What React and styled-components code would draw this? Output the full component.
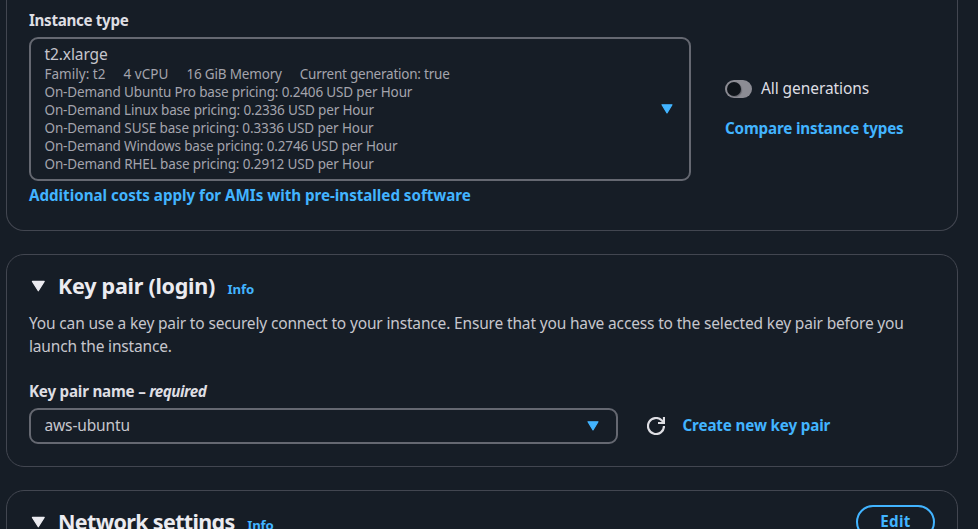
import React from "react";
import styled, { createGlobalStyle } from "styled-components";

const GlobalStyle = createGlobalStyle`
  * { box-sizing: border-box; }
  body {
    margin: 0;
    background: #161d26;
    color: #c6c6cd;
    font: 400 15.5px/22px "Noto Sans", "Open Sans", sans-serif;
    overflow: hidden;
  }
`;

const Page = styled.main`
  display: flex;
  flex-direction: column;
  gap: 23px;
  width: 978px;
  height: 529px;
  padding: 0 20px 0 6px;
  overflow: hidden;
`;

const Card = styled.section`
  flex: none;
  width: 952px;
  height: ${(p) => p.$height}px;
  padding: 17px 22px 0;
  border: 1px solid #424650;
  border-radius: 18px;
`;

const OpenTopCard = styled(Card)`
  padding-top: 9px;
  border-top: 0;
  border-radius: 0 0 18px 18px;
`;

const Row = styled.div`
  display: flex;
  align-items: flex-start;
`;

const Field = styled.div`
  display: flex;
  flex-direction: column;
  width: ${(p) => p.$width}px;
`;

const Label = styled.div`
  margin-bottom: 6px;
  color: #dedee3;
  font-size: 15.2px;
  font-weight: 700;
  white-space: pre;
  letter-spacing: ${(p) => p.$track || 0}px;
`;

const Required = styled.em`
  letter-spacing: -0.5px;
`;

const Select = styled.div`
  display: flex;
  align-items: center;
  justify-content: space-between;
  height: ${(p) => p.$height}px;
  padding: 0 ${(p) => p.$end || 16}px 0 13.5px;
  border: 2px solid #656871;
  border-radius: 9px;
`;

const Option = styled.div`
  display: flex;
  flex-direction: column;
  margin-bottom: 2px;
`;

const OptionName = styled.div`
  letter-spacing: ${(p) => p.$track}px;
`;

const Details = styled.div`
  display: flex;
  gap: 18px;
  height: 18px;
  color: #a4a4ad;
  font-size: 13.5px;
  line-height: 18px;
  white-space: nowrap;
`;

const Detail = styled.span`
  letter-spacing: ${(p) => p.$track}px;
`;

const Link = styled.a`
  color: #42b4ff;
  font-size: 15.2px;
  font-weight: 700;
  white-space: nowrap;
  letter-spacing: ${(p) => p.$track || 0}px;
`;

const CostLink = styled(Link)`
  margin-top: 3px;
`;

const Side = styled.div`
  display: flex;
  flex-direction: column;
  gap: 18px;
  margin: 68px 0 0 34px;
`;

const ToggleRow = styled.label`
  display: flex;
  align-items: center;
  gap: 9px;
  color: #dedee3;
  letter-spacing: -0.08px;
`;

const Track = styled.span`
  width: 27px;
  height: 18px;
  margin-top: 1px;
  padding: 2px;
  border-radius: 9px;
  background: #8c8c94;
`;

const Thumb = styled.span`
  display: block;
  width: 14px;
  height: 14px;
  border-radius: 50%;
  background: #0f141a;
  box-shadow: 1px 1px 1px rgba(15, 20, 26, 0.3);
`;

const Header = styled.header`
  display: flex;
  align-items: center;
  height: 28px;
  padding-left: 2px;
`;

const Title = styled.h2`
  margin: 0 0 0 12px;
  color: #ebebf0;
  font-size: 21.5px;
  font-weight: 700;
  line-height: 28px;
  letter-spacing: ${(p) => p.$track}px;
`;

const Info = styled(Link)`
  margin: 6px 0 0 12.5px;
  font-size: 13.2px;
  letter-spacing: -0.15px;
`;

const Description = styled.p`
  margin: 12px 0 22px;
  line-height: 23px;
  white-space: pre;
  letter-spacing: -0.16px;
`;

const Actions = styled.div`
  display: flex;
  align-items: center;
  gap: 17.5px;
  height: 36px;
  margin: 28px 0 0 29px;
`;

const ActionLink = styled(Link)`
  margin-bottom: 2px;
`;

const KeyName = styled(OptionName)`
  margin-bottom: 2px;
`;

const EditButton = styled.button`
  width: 79px;
  height: 34px;
  margin: 0 0 0 auto;
  padding: 0 0 2px;
  border: 2px solid #42b4ff;
  border-radius: 18px;
  background: transparent;
  color: #42b4ff;
  font: inherit;
  font-size: 15.2px;
  font-weight: 700;
  letter-spacing: 0.3px;
`;

const Icon = styled.svg`
  display: block;
  flex: none;
`;

const SelectCaret = () => (
  <Icon width="12" height="10" viewBox="0 0 12 10">
    <path d="M1 .8h10L6 8.9z" fill="#42b4ff" stroke="#42b4ff" strokeWidth="1.2" strokeLinejoin="round" />
  </Icon>
);

const HeaderCaret = () => (
  <Icon width="15" height="12" viewBox="0 0 15 12">
    <path d="M1.4 1.4h11.8L7.3 10.8z" fill="#ebebf0" stroke="#ebebf0" strokeWidth="1.2" strokeLinejoin="round" />
  </Icon>
);

const RefreshIcon = () => (
  <Icon width="18" height="18" viewBox="0 0 18 18" fill="none" stroke="#dedee3" strokeWidth="2.2">
    <path d="M17 9a8 8 0 1 1-2.4-5.7L16.6 5.3" />
    <path d="M17 0v6H11" />
  </Icon>
);

const prices = [
  ["Ubuntu Pro", "0.2406", -0.15],
  ["Linux", "0.2336", -0.155],
  ["SUSE", "0.3336", -0.12],
  ["Windows", "0.2746", -0.145],
  ["RHEL", "0.2912", -0.135],
];

export default function App() {
  return (
    <>
      <GlobalStyle />
      <Page>
        <OpenTopCard $height={231}>
          <Row>
            <Field $width={662}>
              <Label $track={-0.33}>Instance type</Label>
              <Select $height={144}>
                <Option>
                  <OptionName $track={-0.1}>t2.xlarge</OptionName>
                  <Details>
                    <Detail $track={0.02}>Family: t2</Detail>
                    <Detail $track={0.05}>4 vCPU</Detail>
                    <Detail $track={-0.18}>16 GiB Memory</Detail>
                    <Detail $track={-0.23}>Current generation: true</Detail>
                  </Details>
                  {prices.map(([os, price, track]) => (
                    <Details key={os}>
                      <Detail $track={track}>
                        On-Demand {os} base pricing: {price} USD per Hour
                      </Detail>
                    </Details>
                  ))}
                </Option>
                <SelectCaret />
              </Select>
              <CostLink $track={-0.035}>Additional costs apply for AMIs with pre-installed software</CostLink>
            </Field>
            <Side>
              <ToggleRow>
                <Track><Thumb /></Track>
                All generations
              </ToggleRow>
              <Link $track={-0.17}>Compare instance types</Link>
            </Side>
          </Row>
        </OpenTopCard>

        <Card $height={213}>
          <Header>
            <HeaderCaret />
            <Title $track={-0.25}>Key pair (login)</Title>
            <Info>Info</Info>
          </Header>
          <Description>
            {"You can use a key pair to securely connect to your instance. Ensure that you have access to the selected key pair before you\nlaunch the instance."}
          </Description>
          <Row>
            <Field $width={589}>
              <Label $track={-0.22}>
                Key pair name – <Required>required</Required>
              </Label>
              <Select $height={36} $end={17}>
                <KeyName $track={-0.14}>aws-ubuntu</KeyName>
                <SelectCaret />
              </Select>
            </Field>
            <Actions>
              <RefreshIcon />
              <ActionLink $track={-0.14}>Create new key pair</ActionLink>
            </Actions>
          </Row>
        </Card>

        <Card $height={213}>
          <Header>
            <HeaderCaret />
            <Title $track={-0.65}>Network settings</Title>
            <Info>Info</Info>
            <EditButton>Edit</EditButton>
          </Header>
        </Card>
      </Page>
    </>
  );
}
